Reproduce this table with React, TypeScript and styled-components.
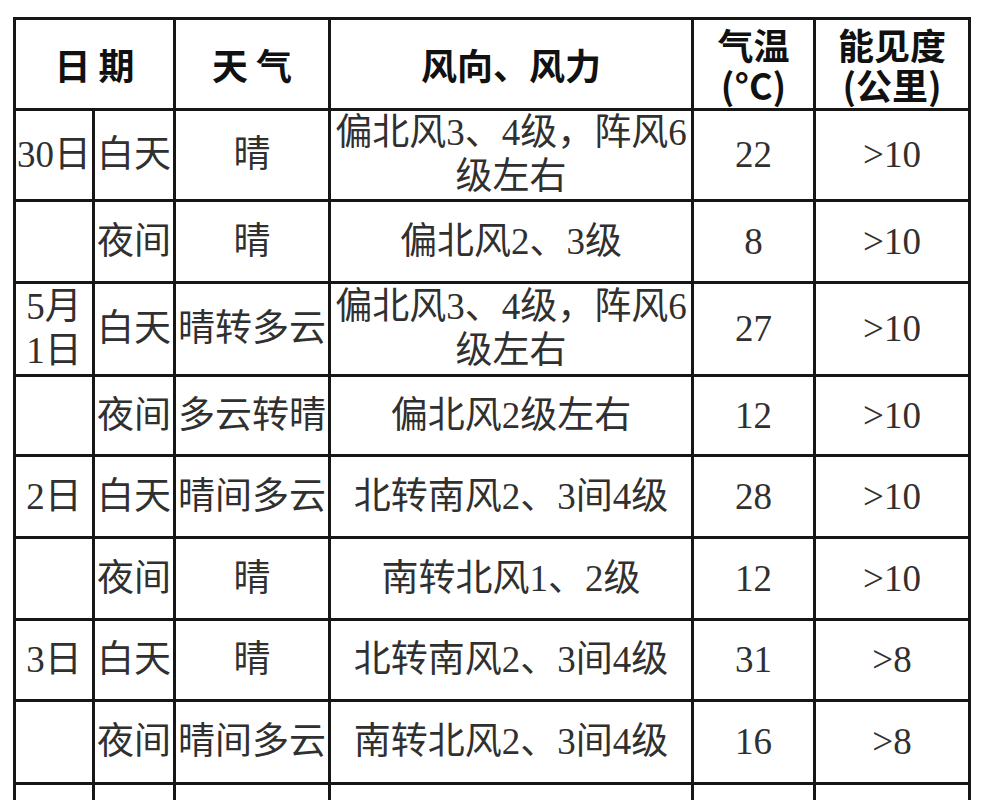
import React from "react";
import styled, { createGlobalStyle } from "styled-components";

const GlobalStyle = createGlobalStyle`
  html, body {
    margin: 0;
    padding: 0;
    background: #ffffff;
  }
`;

const Sheet = styled.div`
  display: grid;
  grid-template-columns: 76px 78px 152px 360px 119px 152px;
  grid-template-rows: 88px 88px 79px 90px 77px 79px 79px 78px 80px 40px;
  gap: 3px;
  padding: 3px;
  width: max-content;
  margin: 17px 0 0 13px;
  background: #161616;
`;

const Cell = styled.div<{ $span?: number; $tight?: boolean }>`
  grid-column: span ${(p) => p.$span ?? 1};
  display: flex;
  align-items: center;
  justify-content: center;
  text-align: center;
  background: #ffffff;
  white-space: ${(p) => (p.$tight ? "pre" : "pre-line")};
`;

const HeadCell = styled(Cell)`
  font-family: "Noto Sans CJK SC", "Liberation Sans", sans-serif;
  font-weight: 700;
  font-size: 36px;
  line-height: 40px;
  color: #111111;
`;

const BodyCell = styled(Cell)`
  font-family: "Liberation Serif", "Noto Sans CJK SC", serif;
  font-size: 37px;
  line-height: 44px;
  color: #303030;
`;

const headers = [
  { text: "日 期", span: 2 },
  { text: "天 气" },
  { text: "风向、风力" },
  { text: "气温\n(°C)" },
  { text: "能见度\n(公里)" },
];

const rows = [
  ["30日", "白天", "晴", "偏北风3、4级，阵风6级左右", "22", ">10"],
  ["", "夜间", "晴", "偏北风2、3级", "8", ">10"],
  ["5月\n1日", "白天", "晴转多云", "偏北风3、4级，阵风6级左右", "27", ">10"],
  ["", "夜间", "多云转晴", "偏北风2级左右", "12", ">10"],
  ["2日", "白天", "晴间多云", "北转南风2、3间4级", "28", ">10"],
  ["", "夜间", "晴", "南转北风1、2级", "12", ">10"],
  ["3日", "白天", "晴", "北转南风2、3间4级", "31", ">8"],
  ["", "夜间", "晴间多云", "南转北风2、3间4级", "16", ">8"],
  ["", "", "", "", "", ""],
];

export default function App() {
  return (
    <>
      <GlobalStyle />
      <Sheet>
        {headers.map((h) => (
          <HeadCell key={h.text} $span={h.span}>
            {h.text}
          </HeadCell>
        ))}
        {rows.map((row, r) =>
          row.map((value, c) => (
            <BodyCell key={`r${r}-c${c}`} $tight={c < 2}>
              {value}
            </BodyCell>
          ))
        )}
      </Sheet>
    </>
  );
}
